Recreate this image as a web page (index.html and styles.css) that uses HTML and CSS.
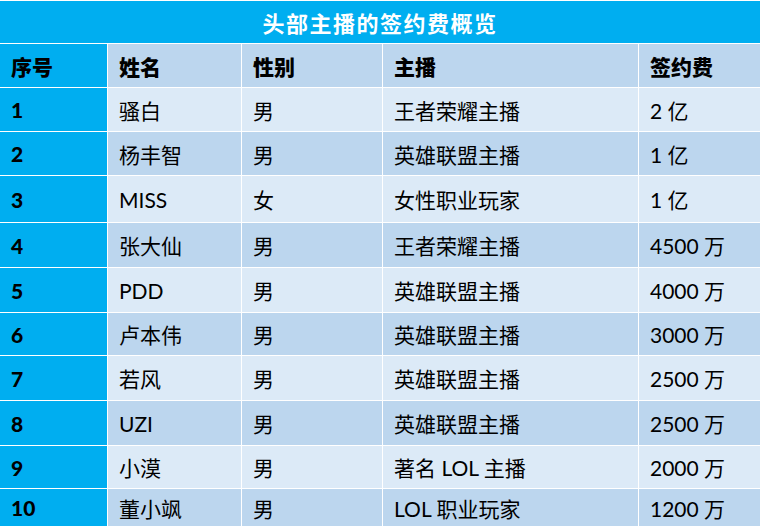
FILE: index.html
```html
<!DOCTYPE html>
<html lang="zh">
<head>
<meta charset="utf-8">
<link rel="stylesheet" href="styles.css">
</head>
<body>
<div class="table">
  <div class="title">头部主播的签约费概览</div>
  <div class="c num head">序号</div><div class="c head">姓名</div><div class="c head">性别</div><div class="c head">主播</div><div class="c head">签约费</div>
  <div class="c num">1</div><div class="c odd">骚白</div><div class="c odd">男</div><div class="c odd">王者荣耀主播</div><div class="c odd">2 亿</div>
  <div class="c num">2</div><div class="c even">杨丰智</div><div class="c even">男</div><div class="c even">英雄联盟主播</div><div class="c even">1 亿</div>
  <div class="c num">3</div><div class="c odd">MISS</div><div class="c odd">女</div><div class="c odd">女性职业玩家</div><div class="c odd">1 亿</div>
  <div class="c num">4</div><div class="c even">张大仙</div><div class="c even">男</div><div class="c even">王者荣耀主播</div><div class="c even">4500 万</div>
  <div class="c num">5</div><div class="c odd">PDD</div><div class="c odd">男</div><div class="c odd">英雄联盟主播</div><div class="c odd">4000 万</div>
  <div class="c num">6</div><div class="c even">卢本伟</div><div class="c even">男</div><div class="c even">英雄联盟主播</div><div class="c even">3000 万</div>
  <div class="c num">7</div><div class="c odd">若风</div><div class="c odd">男</div><div class="c odd">英雄联盟主播</div><div class="c odd">2500 万</div>
  <div class="c num">8</div><div class="c even">UZI</div><div class="c even">男</div><div class="c even">英雄联盟主播</div><div class="c even">2500 万</div>
  <div class="c num">9</div><div class="c odd">小漠</div><div class="c odd">男</div><div class="c odd">著名 LOL 主播</div><div class="c odd">2000 万</div>
  <div class="c num">10</div><div class="c even">董小飒</div><div class="c even">男</div><div class="c even">LOL 职业玩家</div><div class="c even">1200 万</div>
</div>
</body>
</html>
```
FILE: styles.css
```css
html, body {
  margin: 0;
  padding: 0;
  background: #ffffff;
}
body {
  font-family: Lato, "Noto Sans CJK SC", sans-serif;
  color: #000000;
}
.table {
  display: grid;
  grid-template-columns: 107px 133px 140px 255px 121px;
  grid-template-rows: 42px 43px 43px 43px 46px 44px 44px 42px 44px 44px 42px 37px;
  gap: 1px;
  width: 760px;
  padding-top: 1px;
  background: #ffffff;
}
.title {
  grid-column: 1 / -1;
  background: #00aef0;
  color: #ffffff;
  font-weight: bold;
  font-size: 22px;
  display: flex;
  align-items: center;
  justify-content: center;
  letter-spacing: 1.5px;
}
.c {
  display: flex;
  align-items: center;
  padding-left: 11px;
  font-size: 21px;
}
.num {
  background: #00aef0;
  font-weight: 900;
}
.head {
  background: #bcd6ee;
  font-weight: 900;
}
.head.num {
  background: #00aef0;
}
.odd {
  background: #dceaf7;
}
.even {
  background: #bcd6ee;
}
```
